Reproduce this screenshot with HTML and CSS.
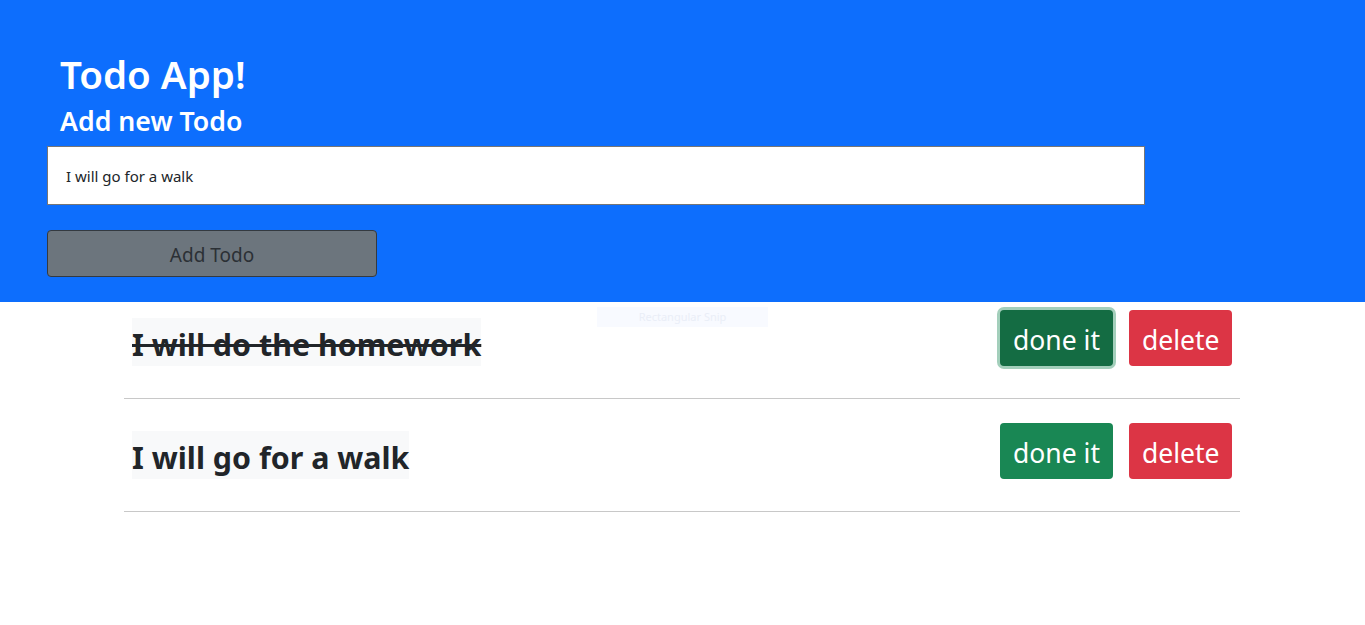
FILE: index.html
```html
<!DOCTYPE html>
<html lang="en">
<head>
<meta charset="utf-8">
<title>Todo App</title>
<link rel="stylesheet" href="styles.css">
</head>
<body>
<header class="hero">
  <h1 class="title">Todo App!</h1>
  <h3 class="subtitle">Add new Todo</h3>
  <input class="todo-input" type="text" value="I will go for a walk">
  <button class="add-btn" type="button">Add Todo</button>
</header>
<div class="snip">Rectangular Snip</div>
<main class="list">
  <div class="todo">
    <h2 class="todo-text done">I will do the homework</h2>
    <div class="actions">
      <button class="btn btn-done focused" type="button">done it</button>
      <button class="btn btn-delete" type="button">delete</button>
    </div>
  </div>
  <hr class="sep">
  <div class="todo">
    <h2 class="todo-text">I will go for a walk</h2>
    <div class="actions">
      <button class="btn btn-done" type="button">done it</button>
      <button class="btn btn-delete" type="button">delete</button>
    </div>
  </div>
  <hr class="sep">
</main>
</body>
</html>
```

FILE: styles.css
```css
* { box-sizing: border-box; }
html, body { margin: 0; padding: 0; }
body {
  font-family: "Noto Sans", "Open Sans", sans-serif;
  color: #212529;
  background: #fff;
  position: relative;
}
.hero {
  background: #0d6efd;
  height: 302px;
  padding: 50px 0 0 47px;
  display: flex;
  flex-direction: column;
  align-items: flex-start;
}
.title {
  margin: 0 0 0 13px;
  font-size: 38.5px;
  font-weight: 600;
  line-height: 48px;
  color: #fff;
}
.subtitle {
  margin: 6px 0 0 13px;
  font-size: 26.7px;
  font-weight: 600;
  line-height: 34px;
  color: #fff;
}
.todo-input {
  margin-top: 8px;
  width: 1098px;
  height: 59px;
  border: 1px solid #767676;
  background: #fff;
  padding: 0 18px;
  font-family: inherit;
  font-size: 15px;
  color: #212529;
  outline: none;
}
.add-btn {
  margin-top: 25px;
  width: 330px;
  height: 47px;
  background: #6c757d;
  border: 1px solid #343a40;
  border-radius: 4px;
  color: #2b3035;
  font-family: inherit;
  font-size: 19px;
  padding: 2px 0 0 0;
}
.snip {
  position: absolute;
  left: 597px;
  top: 307px;
  width: 171px;
  height: 20px;
  background: #f8faff;
  color: #eaeef7;
  font-size: 11px;
  line-height: 20px;
  text-align: center;
}
.list {
  width: 1116px;
  margin-left: 124px;
}
.todo {
  display: flex;
  justify-content: space-between;
  align-items: flex-start;
  padding: 24px 8px 32px 8px;
}
.todo:first-child { padding-top: 8px; }
.todo-text {
  margin: 8px 0 0 0;
  background: #f8f9fa;
  font-size: 30.4px;
  font-weight: 700;
  line-height: 53px;
  height: 48px;
  white-space: nowrap;
  overflow: visible;
}
.todo-text.done { text-decoration: line-through; }
.actions {
  display: flex;
  gap: 16px;
}
.btn {
  height: 56px;
  border: 0;
  border-radius: 4px;
  color: #fff;
  font-family: inherit;
  font-size: 26.5px;
  padding: 3px 13px 0 13px;
}
.btn-done { background: #198754; width: 113px; }
.btn-done.focused {
  background: #146c43;
  box-shadow: 0 0 0 3px #a3cfbb;
}
.btn-delete { background: #dc3545; width: 103px; }
.sep {
  margin: 0;
  border: 0;
  border-top: 1px solid #c8c8c8;
}
```
